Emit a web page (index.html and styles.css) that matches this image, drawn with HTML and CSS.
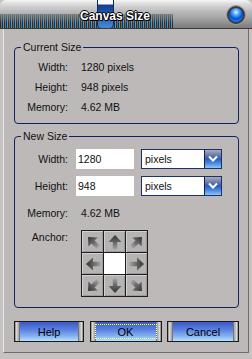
FILE: index.html
```html
<!DOCTYPE html>
<html lang="en">
<head>
  <meta charset="UTF-8" />
  <title>Canvas Size</title>
  <link rel="stylesheet" href="styles.css">
</head>
<body>
<svg class="defs" width="0" height="0">
  <defs>
    <linearGradient id="arrgrad" x1="0" y1="0" x2="1" y2="0">
      <stop offset="0" stop-color="#a4a4a4"/>
      <stop offset="0.45" stop-color="#6a6a6a"/>
      <stop offset="1" stop-color="#333"/>
    </linearGradient>
  </defs>
</svg>
<div class="window">
  <div class="titlebar">
    <span class="stripes"></span>
    <span class="tab"></span>
    <h1 class="title">Canvas Size</h1>
    <span class="orb"></span>
  </div>

  <div class="panel">
    <fieldset class="group current">
      <legend>Current Size</legend>
      <div class="row"><span class="label">Width:</span><span class="value">1280 pixels</span></div>
      <div class="row"><span class="label">Height:</span><span class="value">948 pixels</span></div>
      <div class="row"><span class="label">Memory:</span><span class="value">4.62 MB</span></div>
    </fieldset>

    <fieldset class="group new">
      <legend>New Size</legend>
      <div class="row">
        <label class="label" for="new_width">Width:</label>
        <input class="field" id="new_width" type="text" value="1280">
        <div class="select"><span>pixels</span><span class="drop"><svg width="12" height="8" viewBox="0 0 12 8"><path d="M2 1.5 L6 5.5 L10 1.5" fill="none" stroke="#fff" stroke-width="2"/></svg></span></div>
      </div>
      <div class="row">
        <label class="label" for="new_height">Height:</label>
        <input class="field" id="new_height" type="text" value="948">
        <div class="select"><span>pixels</span><span class="drop"><svg width="12" height="8" viewBox="0 0 12 8"><path d="M2 1.5 L6 5.5 L10 1.5" fill="none" stroke="#fff" stroke-width="2"/></svg></span></div>
      </div>
      <div class="row"><span class="label">Memory:</span><span class="value">4.62 MB</span></div>
      <div class="row anchor-row">
        <span class="label">Anchor:</span>
        <div class="anchor">
          <span class="cell"><svg class="arrow r225" viewBox="0 0 20 20"><path d="M2.5 7.8 H10 V3.5 L17 10 L10 16.5 V12.2 H2.5 Z" fill="url(#arrgrad)"/></svg></span>
          <span class="cell"><svg class="arrow r270" viewBox="0 0 20 20"><path d="M2.5 7.8 H10 V3.5 L17 10 L10 16.5 V12.2 H2.5 Z" fill="url(#arrgrad)"/></svg></span>
          <span class="cell"><svg class="arrow r315" viewBox="0 0 20 20"><path d="M2.5 7.8 H10 V3.5 L17 10 L10 16.5 V12.2 H2.5 Z" fill="url(#arrgrad)"/></svg></span>
          <span class="cell"><svg class="arrow r180" viewBox="0 0 20 20"><path d="M2.5 7.8 H10 V3.5 L17 10 L10 16.5 V12.2 H2.5 Z" fill="url(#arrgrad)"/></svg></span>
          <span class="cell center"></span>
          <span class="cell"><svg class="arrow" viewBox="0 0 20 20"><path d="M2.5 7.8 H10 V3.5 L17 10 L10 16.5 V12.2 H2.5 Z" fill="url(#arrgrad)"/></svg></span>
          <span class="cell"><svg class="arrow r135" viewBox="0 0 20 20"><path d="M2.5 7.8 H10 V3.5 L17 10 L10 16.5 V12.2 H2.5 Z" fill="url(#arrgrad)"/></svg></span>
          <span class="cell"><svg class="arrow r90" viewBox="0 0 20 20"><path d="M2.5 7.8 H10 V3.5 L17 10 L10 16.5 V12.2 H2.5 Z" fill="url(#arrgrad)"/></svg></span>
          <span class="cell"><svg class="arrow r45" viewBox="0 0 20 20"><path d="M2.5 7.8 H10 V3.5 L17 10 L10 16.5 V12.2 H2.5 Z" fill="url(#arrgrad)"/></svg></span>
        </div>
      </div>
    </fieldset>

    <div class="buttons">
      <button class="btn help">Help</button>
      <button class="btn ok"><span class="focus">OK</span></button>
      <button class="btn cancel">Cancel</button>
    </div>
  </div>
</div>
</body>
</html>
```

FILE: styles.css
```css
body {
  margin: 0;
  font-family: "Liberation Sans", Arial, sans-serif;
  font-size: 10.5px;
  color: #111;
  background: #bdb9b9;
}
.defs {
  position: absolute;
}
.window {
  width: 252px;
  height: 359px;
  background: #c6c2c2;
  display: flex;
  flex-direction: column;
  overflow: hidden;
}
.titlebar {
  position: relative;
  height: 28px;
  flex: none;
  border-bottom: 1px solid #3a3a3a;
  border-radius: 6px 6px 0 0;
  background: linear-gradient(#f6f6f6 0, #dcdcdc 4px, #b8b8b8 12px, #9c9c9c 20px, #7c7c7c 28px);
}
.stripes {
  position: absolute;
  left: 0;
  top: 14px;
  width: 173px;
  height: 14px;
  background:
    linear-gradient(rgba(150,150,150,0.7), rgba(60,60,60,0) 70%),
    repeating-linear-gradient(90deg, #2c2c2c 0 1px, #6c6c6c 1px 2px, #2c2c2c 2px 3px, #3aa0dc 3px 4px);
}
.tab {
  position: absolute;
  left: 97px;
  top: 0;
  width: 17px;
  height: 28px;
  background: linear-gradient(#fbfbfb 0 4px, #123c8c 5px, #2a62b8 60%, #4a88d8 100%);
  border-radius: 0 0 4px 4px;
  box-shadow: inset 1px 0 #0c2a60, inset -1px 0 #0c2a60;
}
.title {
  position: relative;
  margin: 0;
  padding: 9px 0 0 80px;
  font-size: 12px;
  line-height: 14px;
  font-weight: bold;
  color: #fff;
  text-shadow: 1px 0 #000, -1px 0 #000, 0 1px #000, 0 -1px #000, 1px 1px #000;
}
.orb {
  position: absolute;
  left: 227px;
  top: 6px;
  width: 14px;
  height: 14px;
  border: 2px solid #3a3a3a;
  border-radius: 50%;
  background: radial-gradient(circle at 50% 30%, #e8f4ff 0, #58a8ff 25%, #0050d8 55%, #1890f0 85%, #50d0ff 100%);
  box-shadow: 0 0 0 1px #9a9a9a;
}
.panel {
  flex: 1;
  margin: 0 3px 6px 3px;
  border: 1px solid;
  border-color: #b0adad #6e6e6e #6e6e6e #e6e6e6;
  border-top: none;
  background: #bdb9b9;
  padding: 0 9px 0 10px;
  display: flex;
  flex-direction: column;
}
.group {
  margin: 0;
  padding: 0;
  border: 1px solid #0d2464;
  border-radius: 4px;
}
.group legend {
  margin-left: 6px;
  padding: 0 2px;
  line-height: 13px;
}
.current {
  margin-top: 12px;
  padding: 3px 0 6px 0;
}
.row {
  display: flex;
  align-items: center;
  height: 20px;
}
.label {
  width: 53px;
  text-align: right;
  flex: none;
}
.current .value {
  margin-left: 13px;
}
.new {
  margin-top: 6px;
  padding: 6px 0 10px 0;
  display: flex;
  flex-direction: column;
  gap: 7px;
}
.field {
  margin-left: 8px;
  width: 58px;
  height: 20px;
  box-sizing: border-box;
  border: none;
  padding: 0 2px;
  font: inherit;
  color: #111;
  background: #fff;
}
.select {
  margin-left: 7px;
  width: 81px;
  height: 20px;
  box-sizing: border-box;
  border: 1px solid #1a3070;
  background: #fff;
  display: flex;
  align-items: center;
  justify-content: space-between;
  padding-left: 3px;
}
.drop {
  width: 17px;
  height: 18px;
  box-sizing: border-box;
  border-left: 1px solid #0e2050;
  background: linear-gradient(#a8acbc 0, #6878a8 30%, #2c5cc0 50%, #4c8ce0 75%, #8cc8f4 100%);
  display: flex;
  align-items: center;
  justify-content: center;
}
.new .value {
  margin-left: 13px;
}
.anchor-row {
  height: auto;
  align-items: flex-start;
}
.anchor-row .label {
  margin-top: 1px;
}
.anchor {
  margin-left: 13px;
  display: grid;
  grid-template-columns: repeat(3, 21px);
  grid-template-rows: repeat(3, 21px);
  gap: 1px;
  padding: 1px;
  background: #1e1e1e;
}
.cell {
  background: #b6b3b3;
  box-shadow: inset 1px 1px #d2d0d0, inset -1px -1px #9c9a9a;
  display: flex;
  align-items: center;
  justify-content: center;
}
.cell.center {
  background: #fff;
  box-shadow: none;
}
.arrow {
  width: 20px;
  height: 20px;
}
.r45 { transform: rotate(45deg); }
.r90 { transform: rotate(90deg); }
.r135 { transform: rotate(135deg); }
.r180 { transform: rotate(180deg); }
.r225 { transform: rotate(225deg); }
.r270 { transform: rotate(270deg); }
.r315 { transform: rotate(315deg); }
.buttons {
  margin-top: 13px;
  display: flex;
  justify-content: space-between;
}
.btn {
  height: 21px;
  width: 72px;
  padding: 0;
  border: 1px solid #1a1a1a;
  font: inherit;
  font-size: 11px;
  color: #000;
  cursor: pointer;
  background:
    linear-gradient(90deg, #5a5a5a 0, #e4e4e4 1px, #a0a0a0 4px, #4a4a4a 5px, transparent 5px, transparent calc(100% - 5px), #4a4a4a calc(100% - 5px), #a0a0a0 calc(100% - 4px), #e4e4e4 calc(100% - 1px), #5a5a5a 100%),
    linear-gradient(#3858c4 0, #5a80e0 40%, #86b4f0 75%, #b4e2fc 100%);
  display: flex;
  align-items: center;
  justify-content: center;
}
.btn.help {
  width: 70px;
}
.focus {
  width: 62px;
  height: 15px;
  box-sizing: border-box;
  border: 1px dotted #e8ffe8;
  display: flex;
  align-items: center;
  justify-content: center;
}
```
